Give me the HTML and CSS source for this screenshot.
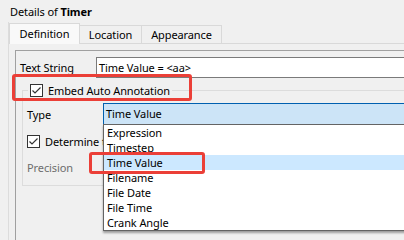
FILE: index.html
```html
<!DOCTYPE html>
<html lang="en">
<head>
  <meta charset="UTF-8" />
  <title>Details of Timer</title>
  <link rel="stylesheet" href="styles.css">
</head>
<body>

  <div class="title">Details of <b>Timer</b></div>

  <div class="frame">
    <div class="tabs">
      <div class="tab active">Definition</div>
      <div class="tab">Location</div>
      <div class="tab">Appearance</div>
    </div>

    <div class="page">
      <div class="inner">
        <div class="row text-row">
          <span class="label">Text String</span>
          <div class="input">Time Value = &lt;aa&gt;</div>
        </div>

        <fieldset class="group">
          <legend class="check-label">
            <span class="check"><svg width="13" height="13" viewBox="0 0 13 13"><rect x="0.5" y="0.5" width="12" height="12" fill="#fff" stroke="#333"/><path d="M2.5 6.5 L5 9 L10.5 3.5" fill="none" stroke="#333" stroke-width="1.2"/></svg></span>
            Embed Auto Annotation
          </legend>

          <div class="row type-row">
            <span class="label">Type</span>
            <div class="combo">
              Time Value
              <ul class="list">
                <li>Expression</li>
                <li>Timestep</li>
                <li class="hover">Time Value</li>
                <li>Filename</li>
                <li>File Date</li>
                <li>File Time</li>
                <li>Crank Angle</li>
              </ul>
            </div>
          </div>

          <div class="row check-label determine">
            <span class="check"><svg width="13" height="13" viewBox="0 0 13 13"><rect x="0.5" y="0.5" width="12" height="12" fill="#fff" stroke="#333"/><path d="M2.5 6.5 L5 9 L10.5 3.5" fill="none" stroke="#333" stroke-width="1.2"/></svg></span>
            <span class="cut">Determine the precision</span>
          </div>

          <div class="row muted">Precision</div>
        </fieldset>
      </div>
    </div>
  </div>

  <!-- red highlight boxes drawn over the dialog -->
  <div class="mark mark-embed"></div>
  <div class="mark mark-time"></div>

</body>
</html>
```

FILE: styles.css
```css
body {
  margin: 0;
  width: 404px;
  height: 240px;
  overflow: hidden;
  position: relative;
  background: #f0f0f0;
  color: #000;
  font-family: "Noto Sans", "Open Sans", sans-serif;
  font-size: 11px;
  letter-spacing: -0.1px;
}

.title {
  padding: 2px 0 0 10px;
  line-height: 20px;
  height: 22px;
  box-sizing: border-box;
}

.frame {
  margin-left: 8px;
  width: 440px;
  border-left: 1px solid #dcdcdc;
}

/* Tabs */
.tabs {
  display: flex;
  align-items: flex-end;
  height: 21px;
  padding-top: 2px;
  box-sizing: border-box;
}

.tab {
  height: 17px;
  line-height: 17px;
  border: 1px solid #d9d9d9;
  border-bottom: none;
  text-align: center;
  margin-left: -1px;
  background: #f0f0f0;
}

.tab:nth-child(2) { width: 61px; }
.tab:nth-child(3) { width: 79px; }

.tab.active {
  width: 69px;
  height: 20px;
  line-height: 20px;
  margin-left: 0;
  margin-bottom: -1px;
  background: #f9f9f9;
  position: relative;
  z-index: 1;
}

.page {
  border-top: 1px solid #d9d9d9;
  padding: 6px 0 0 6px;
}

.inner {
  border-top: 1px solid #a0a0a0;
  border-left: 1px solid #a0a0a0;
  padding: 6px 0 0 4px;
  height: 200px;
}

.row {
  display: flex;
  align-items: center;
}

.label {
  flex: none;
}

.text-row .label { width: 76px; }

.input {
  flex: 1;
  height: 19px;
  line-height: 19px;
  border: 1px solid #7a7a7a;
  background: #fff;
  padding-left: 2px;
}

/* Group box with a checkbox title */
.group {
  margin: 5px 0 0 2px;
  padding: 0 0 10px 4px;
  border: 1px solid #dcdcdc;
  min-width: 0;
}

.group legend {
  margin-left: 1px;
  padding: 0 2px;
  line-height: 15px;
}

.check-label {
  display: flex;
  align-items: center;
  gap: 5px;
}

.check {
  display: flex;
}

.type-row {
  margin-top: 5px;
}

.type-row .label { width: 76px; }

.combo {
  flex: 1;
  position: relative;
  height: 20px;
  line-height: 20px;
  padding-left: 2px;
  background: #cce4f7;
  border: 1px solid #0060b0;
  border-bottom-color: #7a99b8;
}

.list {
  position: absolute;
  top: 20px;
  left: -1px;
  right: -1px;
  margin: 0;
  padding: 0;
  list-style: none;
  background: #fff;
  border: 1px solid #646464;
  box-shadow: 0 2px 2px rgba(0, 0, 0, 0.35);
  z-index: 2;
}

.list li {
  height: 15px;
  line-height: 15px;
  padding-left: 3px;
}

.list li.hover {
  background: #cce8ff;
}

.determine {
  margin-top: 9px;
  line-height: 15px;
  gap: 5px;
}

/* the dropped list hides the rest of this label */
.cut {
  width: 58px;
  overflow: hidden;
  white-space: nowrap;
}

.muted {
  margin-top: 11px;
  line-height: 15px;
  color: #6d6d6d;
}

/* Red highlight marks */
.mark {
  position: absolute;
  border: 3px solid #eb3f37;
  border-radius: 3px;
  box-sizing: border-box;
  z-index: 3;
}

.mark-embed {
  left: 12px;
  top: 74px;
  width: 180px;
  height: 27px;
}

.mark-time {
  left: 89px;
  top: 152px;
  width: 116px;
  height: 22px;
}
```
